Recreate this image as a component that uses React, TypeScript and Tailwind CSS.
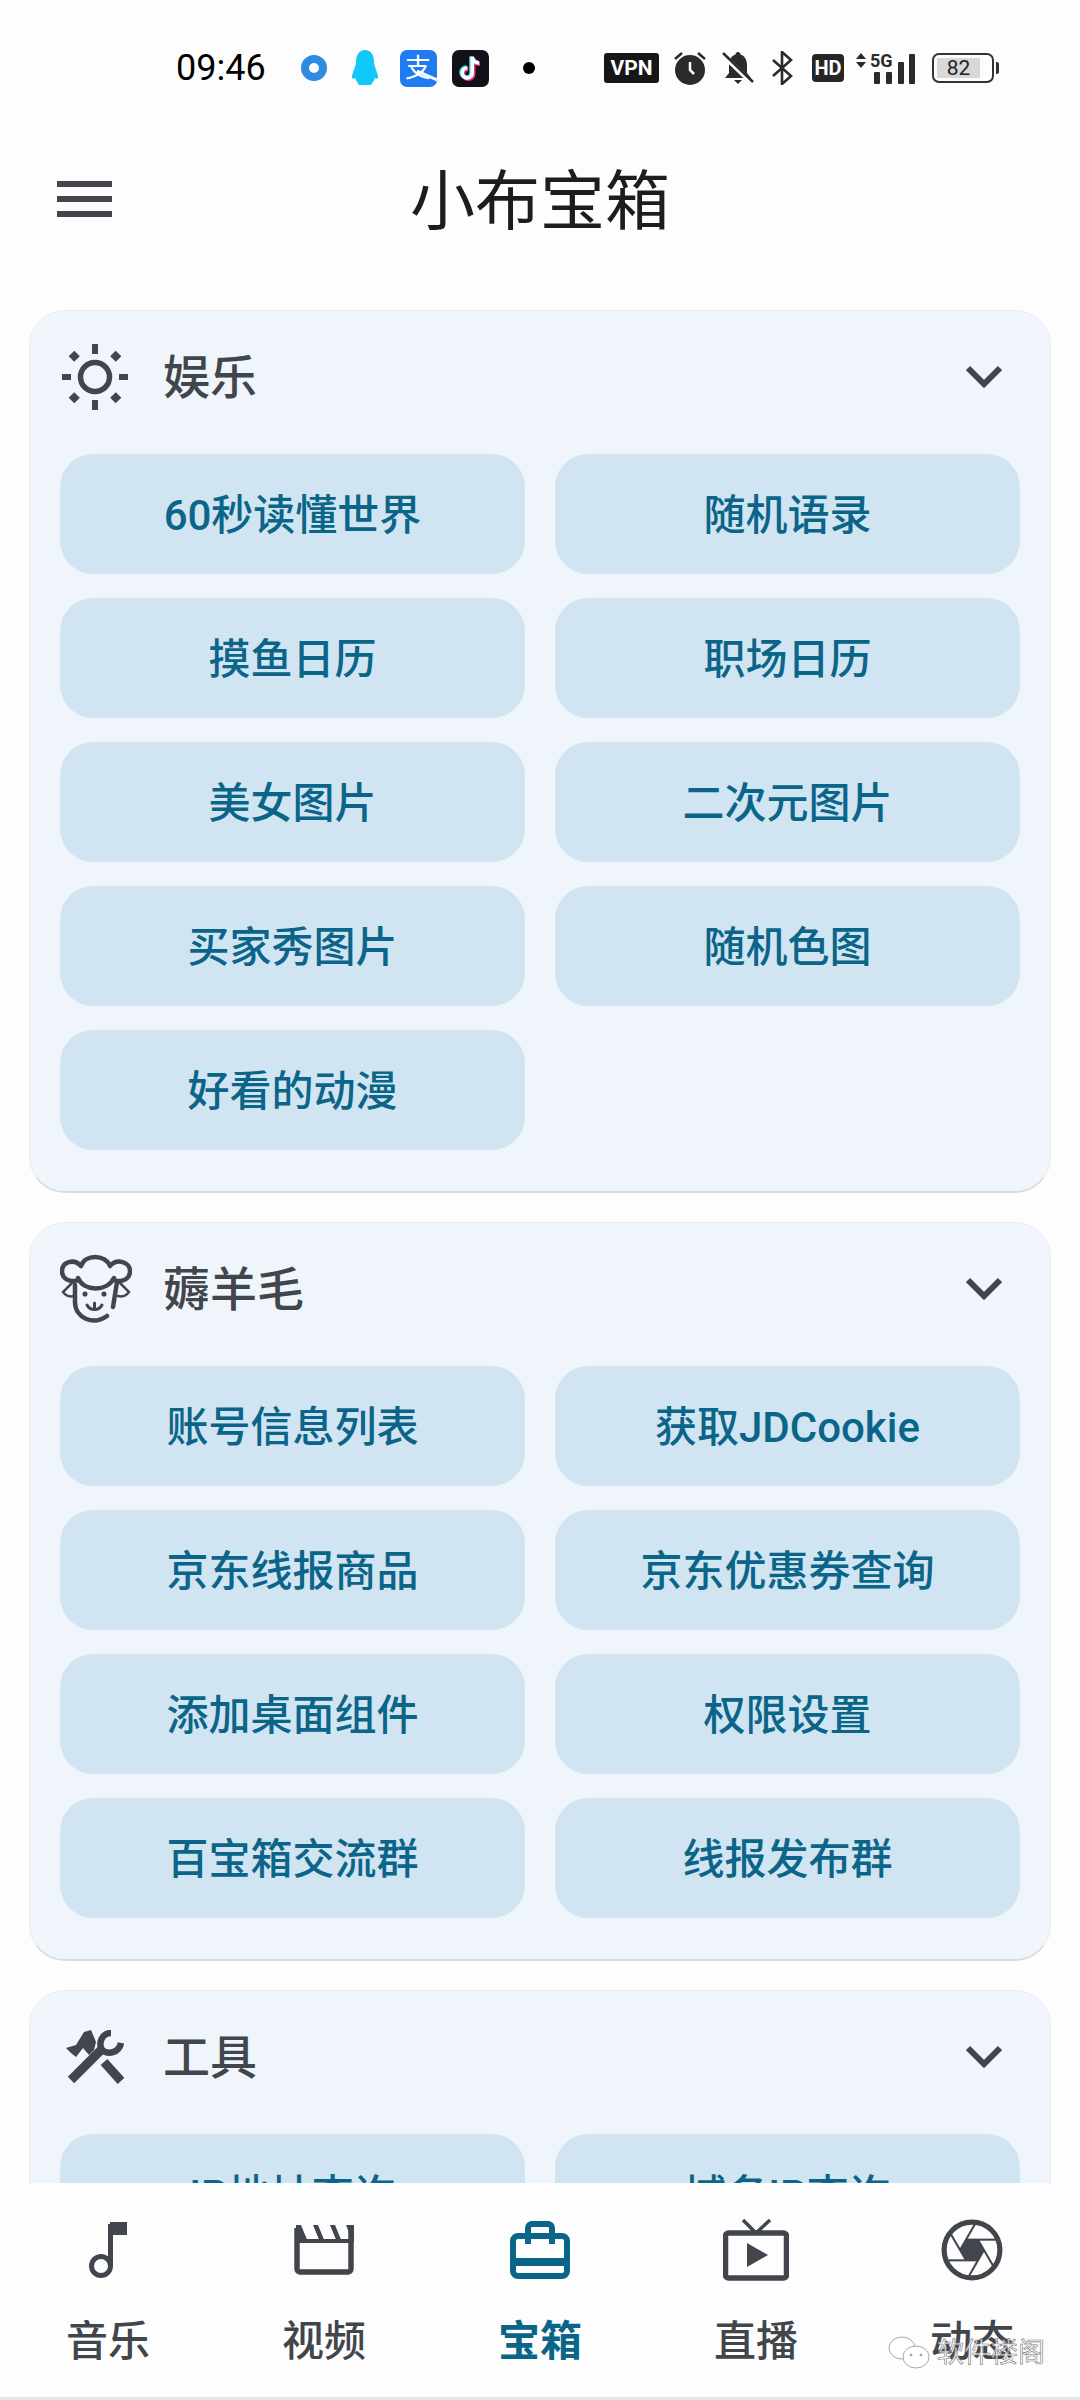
import type { ReactNode } from "react";

const FONT = "font-['Roboto','Noto_Sans_CJK_SC',sans-serif]";

function SunIcon() {
  return (
    <svg viewBox="0 0 66 66" className="w-[66px] h-[66px]" fill="none" stroke="#41464c">
      <circle cx="33" cy="33" r="14.500" strokeWidth="5.500" />
      <path d="M33 0v10M33 56v10M0 33h9M57 33h9" strokeWidth="6" />
      <path d="M9.500 9.500l5.500 5.500M51 51l5.500 5.500M56.500 9.500L51 15M15 51l-5.500 5.500" strokeWidth="8" />
    </svg>
  );
}

function SheepIcon() {
  return (
    <svg viewBox="0 0 72 70" className="w-[72px] h-[70px] -ml-[2px]" fill="none" stroke="#41464c" strokeWidth="4.500" strokeLinecap="round">
      {/* wool */}
      <path d="M21 12C25 0 45 0 50 12M21 12C14 4 2 8 2 17c0 8 8 12 16 9M50 12c7-8 20-4 20 5 0 8-8 12-16 9M18 24c6 14 29 14 36 0" />
      {/* face */}
      <path d="M15 31v17c0 16 18 24 32 14M57 28l-4 25" />
      <path d="M13 28L3 38c3 4 7 5 11 4M59 28l10 10c-3 4-7 5-11 4" strokeWidth="2.500" />
      <circle cx="25" cy="40" r="1.800" fill="#41464c" strokeWidth="1.500" />
      <circle cx="44" cy="40" r="1.800" fill="#41464c" strokeWidth="1.500" />
      <path d="M27 51c3 6 12 6 15 0M34.500 49v6" strokeWidth="3" />
    </svg>
  );
}

function ToolsIcon() {
  return (
    <svg viewBox="0 0 58 55" className="w-[58px] h-[55px] ml-[4px]" fill="#41464c">
      {/* hammer head */}
      <path d="M0 18l10-3 8-13 7-2 5 12-2 8-5 5-6-7-7 9-5-4z" />
      {/* handles */}
      <path d="M5 50l30-30" stroke="#41464c" strokeWidth="9" />
      <path d="M38 32l17 19" stroke="#41464c" strokeWidth="9" />
      {/* wrench head */}
      <path d="M45 3C36 3 32 13 36 20c6 5 17 3 19-7" fill="none" stroke="#41464c" strokeWidth="6.500" />
    </svg>
  );
}

function ChevronIcon() {
  return (
    <svg viewBox="0 0 36 24" className="w-[36px] h-[24px]" fill="none" stroke="#41464c" strokeWidth="6">
      <path d="M2 3l16 16L34 3" />
    </svg>
  );
}

function MusicIcon() {
  return (
    <svg viewBox="0 0 38 56" className="w-[38px] h-[56px]" fill="none" stroke="#41464c">
      <circle cx="12" cy="44" r="9.500" strokeWidth="5" />
      <path d="M21.500 44V2" strokeWidth="5" />
      <rect x="21" y="0" width="17" height="13" fill="#41464c" stroke="none" />
    </svg>
  );
}

function ClapperIcon() {
  return (
    <svg viewBox="0 0 60 50" className="w-[60px] h-[50px]" fill="none">
      <path d="M3 3v41a3 3 0 0 0 3 3h48a3 3 0 0 0 3-3V3" stroke="#41464c" strokeWidth="5.500" />
      <path d="M2 0h5l7 17H2zM19 0h5l7 17h-5zM36 0h5l7 17h-5zM52 0h8v17h-1z" fill="#41464c" />
      <path d="M2 16h57" stroke="#41464c" strokeWidth="4" />
    </svg>
  );
}

function BriefcaseIcon() {
  return (
    <svg viewBox="0 0 60 58" className="w-[60px] h-[58px]" fill="none" stroke="#0a6589" strokeWidth="6">
      <path d="M18 23V7a4 4 0 0 1 4-4h16a4 4 0 0 1 4 4v16" />
      <rect x="3" y="15" width="54" height="40" rx="5" />
      <path d="M3 41h54" strokeWidth="8" />
    </svg>
  );
}

function TvIcon() {
  return (
    <svg viewBox="0 0 66 62" className="w-[66px] h-[62px]" fill="none" stroke="#41464c">
      <rect x="2.500" y="14" width="61" height="45" rx="3" strokeWidth="5.500" />
      <path d="M20 1l13 13L47 1" strokeWidth="3.500" />
      <path d="M24 24l21 12-21 12z" fill="#41464c" stroke="none" />
    </svg>
  );
}

function ApertureIcon() {
  return (
    <svg viewBox="0 0 24 24" className="w-[62px] h-[62px]" fill="none" stroke="#41464c" strokeWidth="0.800">
      <circle cx="12" cy="12" r="10.800" strokeWidth="2" />
      <path d="m14.310 8 5.740 9.940" />
      <path d="M9.690 8h11.480" />
      <path d="m7.380 12 5.740-9.940" />
      <path d="M9.690 16 3.950 6.060" />
      <path d="M14.310 16H2.830" />
      <path d="m16.620 12-5.740 9.940" />
      <path d="M14.310 8H9.690L7.380 12l2.310 4h4.620l2.310-4z" fill="#41464c" stroke="none" />
    </svg>
  );
}

function StatusBar() {
  return (
    <div className="h-[136px] flex items-center pl-[176px] shrink-0">
      <span className="text-[36px] leading-none text-black w-[90px] font-['Roboto',sans-serif]">09:46</span>
      {/* app notification icons */}
      <svg viewBox="0 0 26 26" className="w-[26px] h-[26px] ml-[35px]">
        <circle cx="13" cy="13" r="9" fill="none" stroke="#2f8be0" strokeWidth="8" />
      </svg>
      <svg viewBox="0 0 30 36" className="w-[30px] h-[36px] ml-[23px]">
        <path d="M15 0c6 0 9 5 9 12 0 4 3 9 4 14 .5 3-1 3-3 2-1 3-3 5-4 7H9c-1-2-3-4-4-7-2 1-3.500 1-3-2 1-5 4-10 4-14C6 5 9 0 15 0z" fill="#12c8f8" />
      </svg>
      <div className="w-[37px] h-[37px] ml-[20px] rounded-[7px] bg-[#1f7bef] relative">
        <span className="absolute left-[5px] top-[3px] text-[26px] leading-none text-white font-['Noto_Sans_CJK_SC',sans-serif]">支</span>
        <svg viewBox="0 0 37 37" className="absolute inset-0 w-[37px] h-[37px]" fill="none">
          <path d="M17 21l20 9" stroke="#ffffff" strokeWidth="3" />
        </svg>
      </div>
      <div className="w-[37px] h-[37px] ml-[15px] rounded-[7px] bg-[#12111a] flex items-center justify-center">
        <svg viewBox="0 0 24 24" className="w-[30px] h-[30px]" fill="none" strokeWidth="3.600">
          <path d="M13 3v13a4 4 0 1 1-4-4M13 3c0 3 2.500 5 5.500 5" stroke="#f0396a" transform="translate(.8 .6)" />
          <path d="M13 3v13a4 4 0 1 1-4-4M13 3c0 3 2.500 5 5.500 5" stroke="#35e0ea" transform="translate(-.6 -.5)" />
          <path d="M13 3v13a4 4 0 1 1-4-4M13 3c0 3 2.500 5 5.500 5" stroke="#ffffff" strokeWidth="2.800" />
        </svg>
      </div>
      <div className="w-[12px] h-[12px] ml-[34px] rounded-full bg-black" />

      {/* system icons */}
      <div className="w-[55px] h-[30px] ml-[69px] rounded-[3px] bg-[#161616] flex items-center justify-center">
        <span className="text-[21px] leading-none font-bold text-white font-['Roboto',sans-serif]">VPN</span>
      </div>
      <svg viewBox="0 0 32 34" className="w-[32px] h-[34px] ml-[15px]" fill="#2b2b2b">
        <circle cx="16" cy="19" r="15" />
        <path d="M1 8l7-6M31 8l-7-6" stroke="#2b2b2b" strokeWidth="2.500" />
        <path d="M16 11v8l4 4" stroke="#fff" strokeWidth="2.500" fill="none" />
      </svg>
      <svg viewBox="0 0 33 34" className="w-[33px] h-[34px] ml-[15px]" fill="#2b2b2b">
        <path d="M17 1c1.500 0 2.500 1 2.500 2.500C24 5 26 9 26 14v8l4 5H4l4-5v-8c0-5 2-9 6.500-10.500C14.500 2 15.500 1 17 1zM13 29h8l-4 4z" />
        <path d="M1 3l30 29" stroke="#fdfdfe" strokeWidth="5" />
        <path d="M2 2l30 29" stroke="#2b2b2b" strokeWidth="2.500" />
      </svg>
      <svg viewBox="0 0 22 34" className="w-[22px] h-[34px] ml-[17px]" fill="none" stroke="#2b2b2b" strokeWidth="2.600">
        <path d="M2 9l18 16-9 8V1l9 8L2 25" />
      </svg>
      <div className="w-[32px] h-[28px] ml-[19px] rounded-[4px] bg-[#262626] flex items-center justify-center">
        <span className="text-[20px] leading-none font-bold text-white font-['Roboto',sans-serif]">HD</span>
      </div>
      <div className="w-[60px] h-[31px] ml-[12px] relative">
        <svg viewBox="0 0 60 31" className="w-[60px] h-[31px]" fill="#2b2b2b">
          <path d="M0 6l5-6 5 6zM0 9h10l-5 6z" />
          <rect x="18" y="19" width="6" height="12" rx="1" />
          <rect x="30" y="19" width="6" height="12" rx="1" />
          <rect x="42" y="9" width="6" height="22" rx="1" />
          <rect x="53" y="1" width="6" height="30" rx="1" />
        </svg>
        <span className="absolute left-[14px] top-[-1px] text-[18px] leading-none font-bold text-[#2b2b2b] font-['Roboto',sans-serif]">5G</span>
      </div>
      <div className="w-[62px] h-[30px] ml-[16px] rounded-[7px] border-2 border-[#333] relative p-[3px]">
        <div className="w-[43px] h-full bg-[#d8d8d8] flex items-center justify-center">
          <span className="text-[21px] leading-none text-[#222] font-['Roboto',sans-serif]">82</span>
        </div>
        <div className="absolute right-[-7px] top-[7px] w-[3px] h-[12px] rounded-r-[2px] bg-[#333]" />
      </div>
    </div>
  );
}

function ActionButton({ label }: { label: string }) {
  return (
    <div className="h-[120px] pt-[3px] rounded-[33px] bg-[#d1e4f2] flex items-center justify-center text-[42px] leading-none font-medium text-[#0a6589]">
      {label}
    </div>
  );
}

function Section({ icon, title, items }: { icon: ReactNode; title: string; items: string[] }) {
  return (
    <div className="mx-[29px] rounded-[36px] bg-[#f0f5fb] border border-[#e9edf1] border-b-[2px] border-b-[#d9dde0]">
      <div className="h-[132px] mb-[11px] flex items-center pr-[48px]">
        <div className="w-[133px] pl-[32px] flex justify-start">{icon}</div>
        <span className="text-[47px] leading-none font-medium text-[#41464c]">{title}</span>
        <div className="ml-auto flex">
          <ChevronIcon />
        </div>
      </div>
      <div className="grid grid-cols-2 gap-x-[30px] gap-y-[24px] px-[30px] pb-[41px]">
        {items.map((item) => (
          <ActionButton key={item} label={item} />
        ))}
      </div>
    </div>
  );
}

const tabs = [
  { label: "音乐", icon: <MusicIcon /> },
  { label: "视频", icon: <ClapperIcon /> },
  { label: "宝箱", icon: <BriefcaseIcon />, active: true },
  { label: "直播", icon: <TvIcon /> },
  { label: "动态", icon: <ApertureIcon /> },
];

function BottomNav() {
  return (
    <div className="h-[217px] shrink-0 bg-[#fdfdfe] relative">
      <div className="grid grid-cols-5 h-[214px]">
        {tabs.map((tab) => (
          <div key={tab.label} className="flex flex-col items-center">
            <div className="h-[66px] mt-[34px] flex items-center justify-center">{tab.icon}</div>
            <span
              className={
                tab.active
                  ? "mt-[38px] text-[42px] leading-none font-bold text-[#0a6589]"
                  : "mt-[38px] text-[42px] leading-none font-medium text-[#41464c]"
              }
            >
              {tab.label}
            </span>
          </div>
        ))}
      </div>
      <div className="h-[3px] bg-[#dfe8e8]" />

      {/* watermark */}
      <div className="absolute left-[887px] top-[152px] flex items-center">
        <svg viewBox="0 0 44 36" className="w-[44px] h-[36px]" fill="#ffffff" stroke="#a8a8a8" strokeWidth="1">
          <ellipse cx="15" cy="13" rx="13" ry="11" />
          <ellipse cx="29" cy="22" rx="13" ry="11" />
          <circle cx="24" cy="20" r="1" fill="#888888" />
          <circle cx="34" cy="20" r="1" fill="#888888" />
        </svg>
        <span className="ml-[6px] text-[27px] leading-none text-white/70 [-webkit-text-stroke:0.6px_#777777]">软件楼阁</span>
      </div>
    </div>
  );
}

export default function App() {
  return (
    <div className={`h-[2400px] w-[1080px] flex flex-col overflow-hidden bg-[#fdfdfe] ${FONT}`}>
      <StatusBar />
      <div className="h-[128px] shrink-0 pt-[5px] flex items-center justify-center relative">
        <div className="absolute left-[57px] top-[45px] w-[55px] flex flex-col gap-[9px]">
          <div className="h-[6px] bg-[#41464c]" />
          <div className="h-[6px] bg-[#41464c]" />
          <div className="h-[6px] bg-[#41464c]" />
        </div>
        <span className="text-[65px] leading-none text-[#1d1d1f]">小布宝箱</span>
      </div>
      <div className="flex-1 min-h-0 overflow-hidden pt-[46px] flex flex-col gap-[29px]">
        <Section
          icon={<SunIcon />}
          title="娱乐"
          items={["60秒读懂世界", "随机语录", "摸鱼日历", "职场日历", "美女图片", "二次元图片", "买家秀图片", "随机色图", "好看的动漫"]}
        />
        <Section
          icon={<SheepIcon />}
          title="薅羊毛"
          items={["账号信息列表", "获取JDCookie", "京东线报商品", "京东优惠券查询", "添加桌面组件", "权限设置", "百宝箱交流群", "线报发布群"]}
        />
        <Section icon={<ToolsIcon />} title="工具" items={["IP地址查询", "域名IP查询"]} />
      </div>
      <BottomNav />
    </div>
  );
}
